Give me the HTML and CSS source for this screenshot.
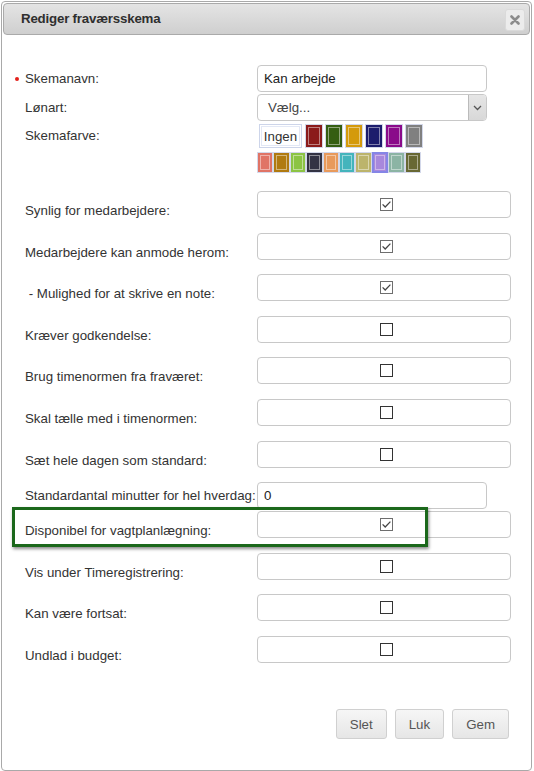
FILE: index.html
```html
<!DOCTYPE html>
<html lang="da">
<head>
<meta charset="utf-8">
<title>Rediger fraværsskema</title>
<link rel="stylesheet" href="styles.css">
</head>
<body>
<div class="dialog">
  <div class="titlebar">
    <span class="title">Rediger fraværsskema</span>
    <span class="close"><svg width="10" height="10" viewBox="0 0 10 10"><path d="M1.5 1.5 L8.5 8.5 M8.5 1.5 L1.5 8.5" stroke="#8c8c8c" stroke-width="2.6" stroke-linecap="round"/></svg></span>
  </div>
  <div class="form">
    <div class="row r-name">
      <span class="lbl req">Skemanavn:</span>
      <input class="txt" type="text" value="Kan arbejde">
    </div>
    <div class="row r-sel">
      <span class="lbl">Lønart:</span>
      <div class="sel"><span class="sel-text">Vælg...</span><span class="sel-arrow"><svg width="9" height="6" viewBox="0 0 9 6"><path d="M1 1 L4.5 4.5 L8 1" stroke="#555" fill="none" stroke-width="1.3"/></svg></span></div>
    </div>
    <div class="row r-color">
      <span class="lbl">Skemafarve:</span>
      <div class="swatches">
        <div class="sw-row1">
          <span class="ingen">Ingen</span>
          <span class="sw" style="--c:#8b1b1b"></span>
          <span class="sw" style="--c:#355e12"></span>
          <span class="sw" style="--c:#d49a0c"></span>
          <span class="sw" style="--c:#1c1c6c"></span>
          <span class="sw" style="--c:#8a0a8a"></span>
          <span class="sw" style="--c:#808080"></span>
        </div>
        <div class="sw-row2">
          <span class="sw" style="--c:#e07466"></span>
          <span class="sw" style="--c:#b07a10"></span>
          <span class="sw" style="--c:#8cc444"></span>
          <span class="sw" style="--c:#333344"></span>
          <span class="sw" style="--c:#e89a5c"></span>
          <span class="sw" style="--c:#44b4bc"></span>
          <span class="sw" style="--c:#bcb46c"></span>
          <span class="sw selected" style="--c:#a888dc"></span>
          <span class="sw" style="--c:#8cb4a4"></span>
          <span class="sw" style="--c:#686834"></span>
        </div>
      </div>
    </div>

    <div class="crow first">
      <span class="lbl">Synlig for medarbejdere:</span>
      <span class="cbox"><svg class="cb" width="13" height="13" viewBox="0 0 13 13"><rect x="0.5" y="0.5" width="12" height="12" fill="#fff" stroke="#6e6e6e"/><path d="M2.6 6.4 L5.2 9 L10.4 3.6" fill="none" stroke="#444" stroke-width="1.3"/></svg></span>
    </div>
    <div class="crow">
      <span class="lbl">Medarbejdere kan anmode herom:</span>
      <span class="cbox"><svg class="cb" width="13" height="13" viewBox="0 0 13 13"><rect x="0.5" y="0.5" width="12" height="12" fill="#fff" stroke="#6e6e6e"/><path d="M2.6 6.4 L5.2 9 L10.4 3.6" fill="none" stroke="#444" stroke-width="1.3"/></svg></span>
    </div>
    <div class="crow">
      <span class="lbl">&nbsp;- Mulighed for at skrive en note:</span>
      <span class="cbox"><svg class="cb" width="13" height="13" viewBox="0 0 13 13"><rect x="0.5" y="0.5" width="12" height="12" fill="#fff" stroke="#6e6e6e"/><path d="M2.6 6.4 L5.2 9 L10.4 3.6" fill="none" stroke="#444" stroke-width="1.3"/></svg></span>
    </div>
    <div class="crow">
      <span class="lbl">Kræver godkendelse:</span>
      <span class="cbox"><svg class="cb" width="13" height="13" viewBox="0 0 13 13"><rect x="0.5" y="0.5" width="12" height="12" fill="#fff" stroke="#333"/></svg></span>
    </div>
    <div class="crow">
      <span class="lbl">Brug timenormen fra fraværet:</span>
      <span class="cbox"><svg class="cb" width="13" height="13" viewBox="0 0 13 13"><rect x="0.5" y="0.5" width="12" height="12" fill="#fff" stroke="#333"/></svg></span>
    </div>
    <div class="crow">
      <span class="lbl">Skal tælle med i timenormen:</span>
      <span class="cbox"><svg class="cb" width="13" height="13" viewBox="0 0 13 13"><rect x="0.5" y="0.5" width="12" height="12" fill="#fff" stroke="#333"/></svg></span>
    </div>
    <div class="crow">
      <span class="lbl">Sæt hele dagen som standard:</span>
      <span class="cbox"><svg class="cb" width="13" height="13" viewBox="0 0 13 13"><rect x="0.5" y="0.5" width="12" height="12" fill="#fff" stroke="#333"/></svg></span>
    </div>
    <div class="row r-min">
      <span class="lbl">Standardantal minutter for hel hverdag:</span>
      <input class="txt" type="text" value="0">
    </div>
    <div class="crow highlight">
      <span class="lbl">Disponibel for vagtplanlægning:</span>
      <span class="cbox"><svg class="cb" width="13" height="13" viewBox="0 0 13 13"><rect x="0.5" y="0.5" width="12" height="12" fill="#fff" stroke="#6e6e6e"/><path d="M2.6 6.4 L5.2 9 L10.4 3.6" fill="none" stroke="#444" stroke-width="1.3"/></svg></span>
      <span class="mark"></span>
    </div>
    <div class="crow">
      <span class="lbl">Vis under Timeregistrering:</span>
      <span class="cbox"><svg class="cb" width="13" height="13" viewBox="0 0 13 13"><rect x="0.5" y="0.5" width="12" height="12" fill="#fff" stroke="#333"/></svg></span>
    </div>
    <div class="crow">
      <span class="lbl">Kan være fortsat:</span>
      <span class="cbox"><svg class="cb" width="13" height="13" viewBox="0 0 13 13"><rect x="0.5" y="0.5" width="12" height="12" fill="#fff" stroke="#333"/></svg></span>
    </div>
    <div class="crow">
      <span class="lbl">Undlad i budget:</span>
      <span class="cbox"><svg class="cb" width="13" height="13" viewBox="0 0 13 13"><rect x="0.5" y="0.5" width="12" height="12" fill="#fff" stroke="#333"/></svg></span>
    </div>
  </div>
  <div class="footer">
    <button class="btn" type="button">Slet</button>
    <button class="btn" type="button">Luk</button>
    <button class="btn" type="button">Gem</button>
  </div>
</div>
</body>
</html>
```
FILE: styles.css
```css
html, body {
  margin: 0;
  padding: 0;
  background: #fff;
}
body {
  font-family: "Liberation Sans", Arial, sans-serif;
  color: #333;
}
.dialog {
  margin: 1px 0 0 1px;
  width: 531px;
  height: 770px;
  box-sizing: border-box;
  border: 1px solid #a9a9a9;
  border-radius: 4px;
  padding: 1px;
  display: flex;
  flex-direction: column;
  background: #fff;
}
.titlebar {
  height: 32px;
  box-sizing: border-box;
  border: 1px solid #aaa;
  border-radius: 4px;
  background: linear-gradient(#e4e4e4, #cfcfcf);
  display: flex;
  align-items: center;
  justify-content: space-between;
  padding: 0 4px 0 17px;
  flex: none;
}
.title {
  font-weight: bold;
  font-size: 13.3px;
  letter-spacing: -0.2px;
  color: #2f2f2f;
  margin-top: -1px;
}
.close {
  width: 20px;
  height: 22px;
  box-sizing: border-box;
  border: 1px solid #dadada;
  border-radius: 3px;
  background: #ececec;
  display: flex;
  align-items: center;
  justify-content: center;
  margin-top: 2px;
}
.form {
  padding: 30px 0 0 22px;
}
.row {
  display: flex;
  align-items: center;
}
.lbl {
  width: 232px;
  flex: none;
  color: #333;
  white-space: nowrap;
  font-size: 13.3px;
}
.req {
  position: relative;
}
.req::before {
  content: "";
  position: absolute;
  left: -10px;
  top: 50%;
  width: 4px;
  height: 4px;
  margin-top: -2px;
  border-radius: 50%;
  background: #e3201b;
}
.txt {
  width: 230px;
  height: 27px;
  box-sizing: border-box;
  border: 1px solid #c8c8c8;
  border-radius: 4px;
  padding: 0 6px;
  margin: 0;
  font-family: "Liberation Sans", Arial, sans-serif;
  font-size: 13.3px;
  color: #222;
  background: #fff;
  outline: none;
}
.r-name {
  margin-bottom: 2px;
}
.sel {
  width: 230px;
  height: 27px;
  box-sizing: border-box;
  border: 1px solid #c8c8c8;
  border-radius: 4px;
  display: flex;
  align-items: center;
  overflow: hidden;
  background: #fff;
}
.sel-text {
  flex: 1;
  padding-left: 10px;
  font-size: 13.3px;
  color: #444;
}
.sel-arrow {
  width: 18px;
  height: 100%;
  box-sizing: border-box;
  border-left: 1px solid #bbb;
  background: linear-gradient(#e6e6e6, #d8d8d8);
  display: flex;
  align-items: center;
  justify-content: center;
}
.r-sel {
  margin-bottom: 3px;
}
.r-color {
  align-items: flex-start;
  margin-bottom: 18px;
}
.r-color .lbl {
  line-height: 24px;
}
.swatches {
  display: flex;
  flex-direction: column;
  gap: 4px;
}
.sw-row1 {
  display: flex;
  gap: 2px;
  height: 24px;
  padding-left: 2px;
}
.ingen {
  width: 43px;
  height: 24px;
  box-sizing: border-box;
  border: 1px solid #cdd5ea;
  box-shadow: inset 0 0 0 1px #fff, inset 0 0 0 2px #e3e8f5;
  display: flex;
  align-items: center;
  justify-content: center;
  font-size: 13.3px;
  color: #333;
  margin-right: 1px;
}
.sw {
  display: block;
  width: 18px;
  box-sizing: border-box;
  border: 1px solid #d3d8ea;
  background: var(--c);
  box-shadow: inset 0 0 0 2px var(--c), inset 0 0 0 3px rgba(255, 255, 255, 0.45);
}
.sw-row2 {
  display: flex;
  height: 21px;
}
.sw-row2 .sw {
  width: 16.4px;
}
.sw.selected {
  border: 2px solid #8585e6;
  box-shadow: inset 0 0 0 1px var(--c), inset 0 0 0 2px rgba(255, 255, 255, 0.4);
}
.crow {
  display: flex;
  align-items: flex-end;
  margin-bottom: 14.6px;
  position: relative;
}
.crow .lbl {
  line-height: 14px;
}
.cbox {
  width: 254px;
  height: 27px;
  box-sizing: border-box;
  border: 1px solid #c8c8c8;
  border-radius: 4px;
  background: #fff;
  display: flex;
  align-items: center;
  justify-content: center;
  padding-left: 4px;
}
.cb {
  display: block;
}
.r-min {
  margin-bottom: 2px;
}
.mark {
  position: absolute;
  left: -13px;
  top: -4px;
  width: 416px;
  height: 40px;
  box-sizing: border-box;
  border: 3px solid #1b681b;
  box-shadow: 1px 2px 3px rgba(0, 0, 0, 0.45);
  pointer-events: none;
}
.footer {
  margin-top: auto;
  display: flex;
  justify-content: flex-end;
  gap: 8px;
  padding: 0 21px 30px 0;
}
.btn {
  height: 30px;
  box-sizing: border-box;
  border: 1px solid #d0d0d0;
  border-radius: 3px;
  background: linear-gradient(#f6f6f6, #e6e6e6);
  color: #555;
  font-family: "Liberation Sans", Arial, sans-serif;
  font-size: 13.3px;
  padding: 0 13px;
  margin: 0;
}
```
